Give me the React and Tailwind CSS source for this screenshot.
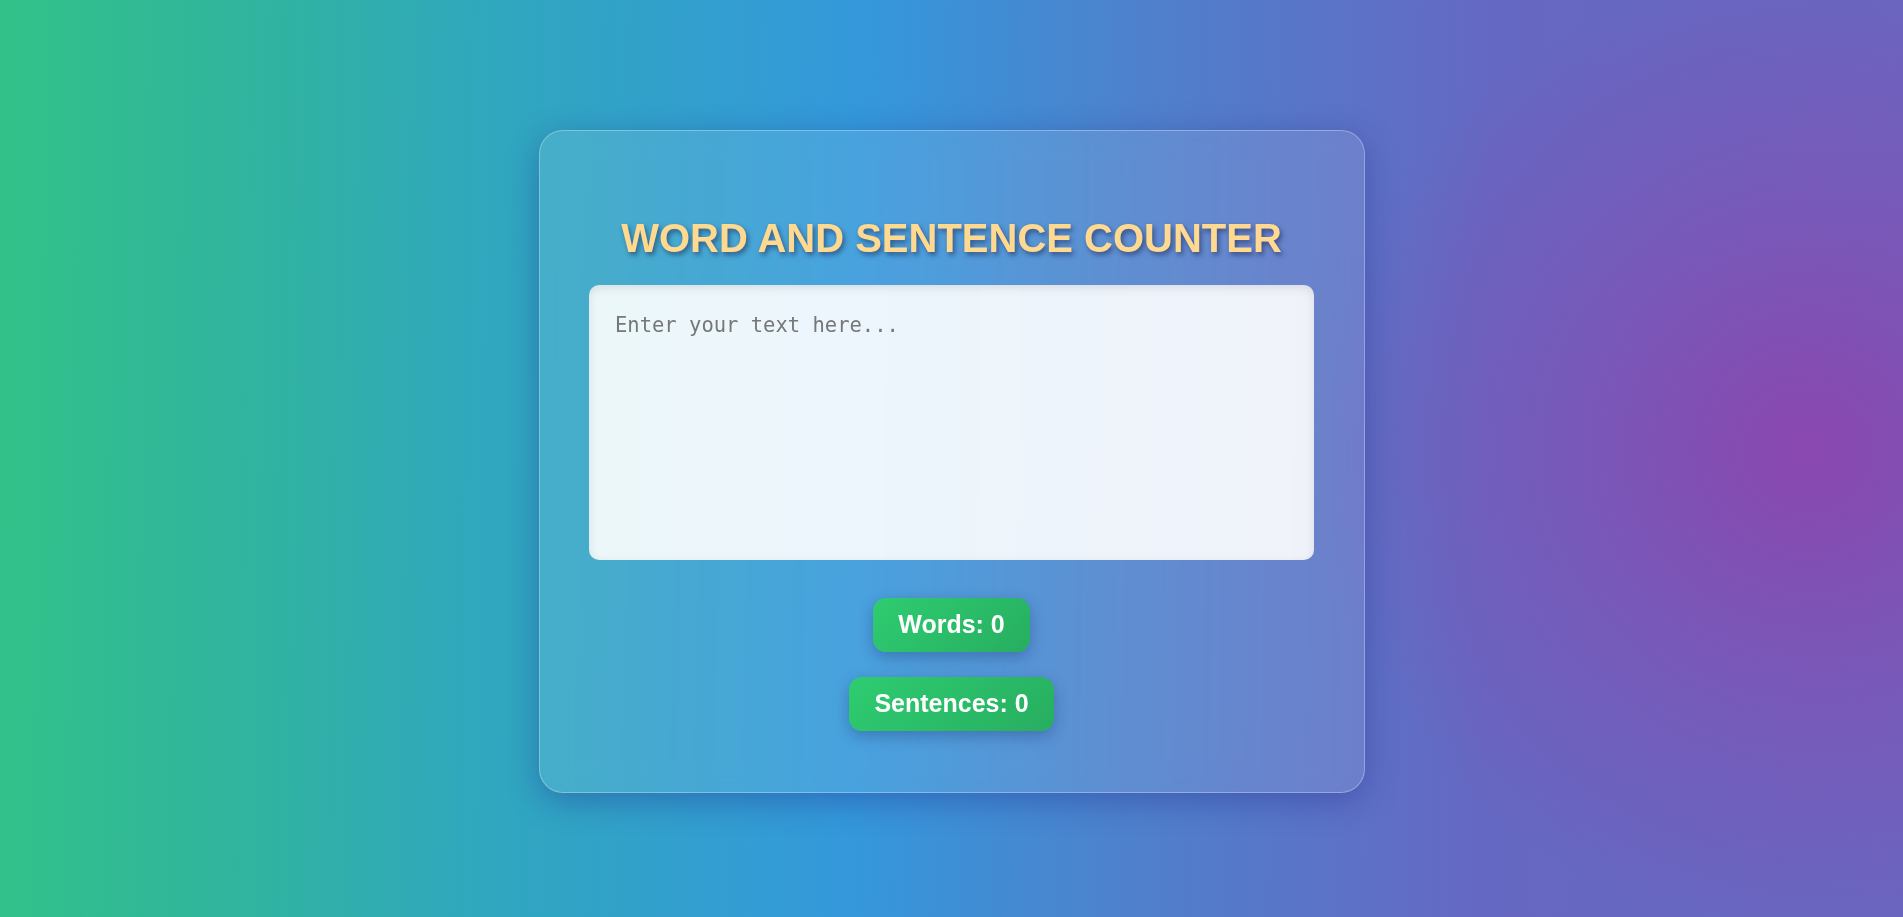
import { useState } from 'react';

const countWords = (text) => {
    const trimmed = text.trim();
    return trimmed ? trimmed.split(/\s+/).length : 0;
};

const countSentences = (text) => {
    const parts = text.split(/[.!?]+/).filter((s) => s.trim().length > 0);
    return parts.length;
};

const App = () => {
    const [text, setText] = useState('');

    return (
        <div className="relative min-h-screen w-full overflow-hidden flex items-center justify-center pt-[6px] bg-[linear-gradient(91deg,#32c288_0%,#30b2a2_15%,#30a8bd_25%,#3498db_45%,#4f80cc_60%,#6568c2_78%,#6a66c0_100%)] font-['Liberation_Sans',Arial,sans-serif]">
            <div className="pointer-events-none absolute inset-0 bg-[radial-gradient(ellipse_26%_52%_at_95%_49%,rgba(142,68,173,0.9)_0%,rgba(142,68,173,0.45)_45%,rgba(142,68,173,0)_100%)]"></div>

            <div className="relative w-[826px] h-[663px] rounded-[24px] border border-white/30 bg-white/10 backdrop-blur-md shadow-[0_8px_32px_rgba(31,38,135,0.37)] px-[50px] pt-[84px] pb-[50px] flex flex-col items-center">
                <h1 className="text-[40px] leading-[46px] font-bold text-[#ffd98f] [text-shadow:2px_3px_5px_rgba(20,20,60,0.5)]">
                    WORD AND SENTENCE COUNTER
                </h1>

                <textarea
                    value={text}
                    onChange={(e) => setText(e.target.value)}
                    placeholder="Enter your text here..."
                    className="mt-6 w-[725px] h-[275px] resize-none rounded-[10px] bg-white/90 pl-[26px] pr-[24px] py-[27px] text-[20.5px] leading-[26px] text-[#333] placeholder:text-[#777] font-['DejaVu_Sans_Mono',monospace] outline-none shadow-[inset_0_3px_10px_rgba(0,0,0,0.1)]"
                ></textarea>

                <div className="mt-[38px] flex flex-col items-center gap-[25px]">
                    <div className="rounded-[13px] bg-[linear-gradient(135deg,#2ecc71,#27ae60)] px-[25px] h-[54px] flex items-center text-[25px] font-bold text-white shadow-[0_5px_15px_rgba(20,30,90,0.3)]">
                        Words: {countWords(text)}
                    </div>
                    <div className="rounded-[13px] bg-[linear-gradient(135deg,#2ecc71,#27ae60)] px-[25px] h-[54px] flex items-center text-[25px] font-bold text-white shadow-[0_5px_15px_rgba(20,30,90,0.3)]">
                        Sentences: {countSentences(text)}
                    </div>
                </div>
            </div>
        </div>
    );
};

export default App;
